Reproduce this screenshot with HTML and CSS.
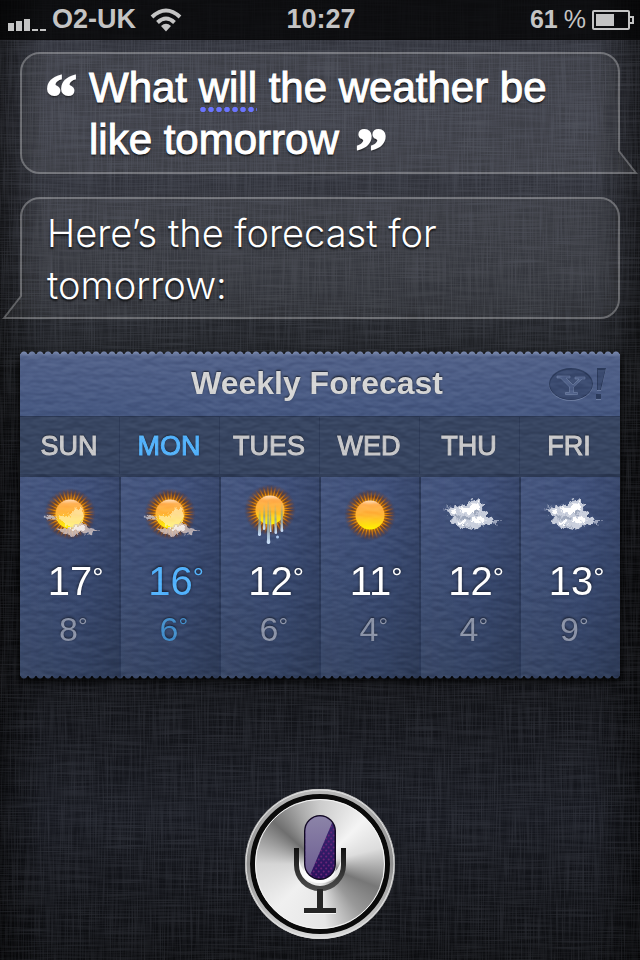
FILE: index.html
```html
<!DOCTYPE html>
<html lang="en">
<head>
    <meta charset="UTF-8">
    <meta name="viewport" content="width=device-width, initial-scale=1.0">
    <title>Weekly Forecast</title>
    <link rel="stylesheet" href="styles.css">
</head>
<body>
    <!-- Linen texture -->
    <svg class="linen" aria-hidden="true">
        <filter id="weaveX" x="0" y="0" width="100%" height="100%">
            <feTurbulence type="fractalNoise" baseFrequency="0.02 0.7" numOctaves="2" seed="4"/>
            <feColorMatrix values="0 0 0 0 0.6  0 0 0 0 0.65  0 0 0 0 0.8  1.6 0 0 0 -0.6"/>
        </filter>
        <filter id="weaveY" x="0" y="0" width="100%" height="100%">
            <feTurbulence type="fractalNoise" baseFrequency="0.7 0.02" numOctaves="2" seed="9"/>
            <feColorMatrix values="0 0 0 0 0.6  0 0 0 0 0.65  0 0 0 0 0.8  1.6 0 0 0 -0.6"/>
        </filter>
        <rect width="100%" height="100%" filter="url(#weaveX)"/>
        <rect width="100%" height="100%" filter="url(#weaveY)"/>
    </svg>

    <!-- Shared drawings -->
    <svg class="defs" aria-hidden="true">
        <defs>
            <linearGradient id="sunFill" x1="0" y1="0" x2="0" y2="1">
                <stop offset="0" stop-color="#ffe0c0"/>
                <stop offset="0.15" stop-color="#ffb050"/>
                <stop offset="0.5" stop-color="#ffb535"/>
                <stop offset="1" stop-color="#fff500"/>
            </linearGradient>
            <radialGradient id="glow">
                <stop offset="0.5" stop-color="#d87a00" stop-opacity="0.95"/>
                <stop offset="0.7" stop-color="#7a3d10" stop-opacity="0.65"/>
                <stop offset="1" stop-color="#5a3030" stop-opacity="0"/>
            </radialGradient>
            <radialGradient id="rays" gradientUnits="userSpaceOnUse" cx="30" cy="30" r="25">
                <stop offset="0.55" stop-color="#ffa800"/>
                <stop offset="0.75" stop-color="#e88000" stop-opacity="0.7"/>
                <stop offset="1" stop-color="#a04010" stop-opacity="0"/>
            </radialGradient>
            <linearGradient id="drip" x1="0" y1="0" x2="0" y2="1">
                <stop offset="0" stop-color="#7fb0b0" stop-opacity="0"/>
                <stop offset="0.5" stop-color="#86a0a0" stop-opacity="0.8"/>
                <stop offset="1" stop-color="#cfe4ff"/>
            </linearGradient>
            <filter id="ragged" x="-20%" y="-30%" width="140%" height="160%">
                <feTurbulence type="fractalNoise" baseFrequency="0.2" numOctaves="4" seed="7" result="n"/>
                <feDisplacementMap in="SourceGraphic" in2="n" scale="8" xChannelSelector="R" yChannelSelector="G"/>
            </filter>
            <symbol id="sun" viewBox="0 0 60 60">
                <circle cx="30" cy="30" r="26" fill="url(#glow)"/>
                <circle cx="30" cy="30" r="19" fill="none" stroke="url(#rays)" stroke-width="12" stroke-dasharray="1.2 2.12"/>
                <circle cx="30" cy="30" r="14.5" fill="url(#sunFill)"/>
            </symbol>
            <symbol id="cloud" viewBox="0 0 64 40">
                <g filter="url(#ragged)">
                    <path d="M4 12 L16 15 L12 19 Z M52 25 L63 25 L58 31 Z M8 10 L14 11 L12 13 Z" fill="#c5cbdb" opacity="0.7"/>
                    <path d="M9 15 Q15 10 21 13 Q23 8 30 9 Q34 2 41 5 Q47 9 44 15 Q50 15 49 21 Q57 23 56 27 Q51 31 45 30 Q38 36 30 33 Q23 36 17 30 Q10 27 15 22 Q9 20 9 15 Z" fill="#c9cfdd"/>
                    <path d="M22 14 Q27 10 31 13 Q35 5 40 8 Q43 12 39 16 L31 19 Q25 20 22 14 Z M32 25 Q38 20 45 22 Q50 25 45 27 Q38 31 32 25 Z M12 16 Q17 13 20 17 L17 20 Z M20 27 Q24 24 29 28 L26 31 Z" fill="#fff"/>
                    <path d="M20 22 Q26 20 32 23 L27 26 Z M35 17 L43 17 L37 21 Z M24 30 L34 31 L26 33 Z M16 22 L22 19 L19 25 Z" fill="#8a95ac" opacity="0.7"/>
                </g>
            </symbol>
            <symbol id="partly" viewBox="0 0 60 60">
                <use href="#sun" width="60" height="60" y="-1"/>
                <g filter="url(#ragged)">
                    <path d="M18 31 Q23 28 28 32 Q33 22 42 23 L44 33 Q39 42 29 41 Q21 39 18 31 Z" fill="#fff2c0" opacity="0.65"/>
                    <path d="M3 31 L12 30 L17 35 L10 34 Z" fill="#d8d8e0" opacity="0.7"/>
                    <path d="M17 44 Q23 41 29 44 Q34 37 43 38 Q47 39 49 43 L60 46 L54 48 Q47 51 40 48 Q33 53 26 49 Q20 49 17 44 Z" fill="#d8c8c4" opacity="0.8"/>
                    <path d="M30 44 Q36 39 44 41 L46 45 L36 46 Z" fill="#fff" opacity="0.7"/>
                </g>
            </symbol>
            <symbol id="rain" viewBox="0 0 60 66">
                <use href="#sun" width="60" height="60" y="-2"/>
                <g fill="url(#drip)">
                    <path d="M19 26 L20.5 26 L21 51 Q21.500 54 19.500 54 Q17.500 54 18 51 Z"/>
                    <path d="M23.500 22 L25 22 L25.500 46 Q25.500 48 24 48 Q22.500 48 23 46 Z"/>
                    <path d="M27.500 18 L29 18 L30 58 Q31 62 28.500 62 Q26 62 27 58 Z"/>
                    <path d="M30 24 L31 24 L31.500 50 L30 50 Z"/>
                    <path d="M34.500 22 L36 22 L37 49 Q37.500 52 36 52 Q34 52 34.500 49 Z"/>
                    <path d="M41 20 L42.500 20 L43 47 Q44 50 42 50 Q40 50 40.500 47 Z"/>
                    <circle cx="37.500" cy="55" r="1.500" fill="#a9c4ea"/>
                </g>
            </symbol>
        </defs>
    </svg>

    <header class="status">
        <div class="carrier">
            <svg width="38" height="14" viewBox="0 0 38 14" fill="#c4c4c4" role="img" aria-label="Signal">
                <path d="M0 6h6v8H0zM8 4h6v10H8zM16 2h6v12h-6zM24 12h6v2h-6zM32 12h6v2h-6z"/>
            </svg>
            <span>O2-UK</span>
            <svg class="wifi" width="32" height="24" viewBox="0 0 32 24" role="img" aria-label="Wi-Fi">
                <g fill="none" stroke="#c4c4c4" stroke-width="4">
                    <path d="M2 9 Q16 -4 30 9"/>
                    <path d="M7.500 14.500 Q16 6.500 24.500 14.500"/>
                </g>
                <path d="M11 18 Q16 13.500 21 18 L16 23.500 Z" fill="#c4c4c4"/>
            </svg>
        </div>
        <time>10:27</time>
        <div class="power">
            <span>61</span>
            <span class="percent">%</span>
            <svg width="42" height="20" viewBox="0 0 42 20" role="img" aria-label="Battery">
                <rect x="1" y="1" width="36" height="18" rx="1" fill="none" stroke="#c4c4c4" stroke-width="2"/>
                <rect x="4" y="4" width="18" height="12" fill="#c4c4c4"/>
                <path d="M38 7h3v6h-3" fill="none" stroke="#c4c4c4" stroke-width="2"/>
            </svg>
        </div>
    </header>

    <main class="siri">
        <div class="bubble question">
            <p><span class="quote open">“</span>What <span class="unsure">will</span> the weather be<br>like tomorrow <span class="quote close">”</span></p>
            <svg class="tail" width="20" height="24" viewBox="0 0 20 24" aria-hidden="true">
                <path d="M1 0 V1 L18 23 H0"/>
            </svg>
        </div>

        <div class="bubble answer">
            <p>Here’s the forecast for tomorrow:</p>
            <svg class="tail" width="20" height="24" viewBox="0 0 20 24" aria-hidden="true">
                <path d="M19 0 V1 L2 23 H20"/>
            </svg>
        </div>

        <div class="shadow">
        <section class="forecast">
            <div class="title">
                <h1>Weekly Forecast</h1>
                <svg class="yahoo" width="60" height="36" viewBox="0 0 60 36" role="img" aria-label="Yahoo!">
                    <ellipse cx="23" cy="19" rx="22" ry="16" fill="#6b7ba0"/>
                    <ellipse cx="23" cy="18" rx="22" ry="16" fill="#2c3b5c"/>
                    <ellipse cx="23" cy="18.500" rx="21" ry="15" fill="#3b4b70"/>
                    <path d="M9 10h13v2h-4l7 7 6-6h-4v-2h10v2h-3L25.500 21v5.500h4v2H17.500v-2h4V21L12.500 12H9z" fill="#4f6088" stroke="#7384a8" stroke-width="0.600"/>
                    <path d="M49 3h9l-5 22h-4zM48 29h5v5h-5z" fill="#6b7ba0"/>
                    <path d="M49 2h9l-5 22h-4zM48 28h5v5h-5z" fill="#2c3b5c"/>
                    <path d="M50 4h7l-5 20h-2z" fill="#3b4b70"/>
                </svg>
            </div>
            <table>
                <thead>
                    <tr>
                        <th>SUN</th>
                        <th class="today">MON</th>
                        <th>TUES</th>
                        <th>WED</th>
                        <th>THU</th>
                        <th>FRI</th>
                    </tr>
                </thead>
                <tbody>
                    <tr class="icons">
                        <td><svg width="60" height="60" role="img" aria-label="Partly cloudy"><use href="#partly"/></svg></td>
                        <td><svg width="60" height="60" role="img" aria-label="Partly cloudy"><use href="#partly"/></svg></td>
                        <td><svg width="60" height="66" role="img" aria-label="Showers"><use href="#rain"/></svg></td>
                        <td><svg width="60" height="60" role="img" aria-label="Sunny"><use href="#sun"/></svg></td>
                        <td><svg width="64" height="40" role="img" aria-label="Cloudy"><use href="#cloud"/></svg></td>
                        <td><svg width="64" height="40" role="img" aria-label="Cloudy"><use href="#cloud"/></svg></td>
                    </tr>
                    <tr class="high">
                        <td>17<span class="deg">°</span></td>
                        <td class="today">16<span class="deg">°</span></td>
                        <td>12<span class="deg">°</span></td>
                        <td>11<span class="deg">°</span></td>
                        <td>12<span class="deg">°</span></td>
                        <td>13<span class="deg">°</span></td>
                    </tr>
                    <tr class="low">
                        <td>8<span class="deg">°</span></td>
                        <td class="today">6<span class="deg">°</span></td>
                        <td>6<span class="deg">°</span></td>
                        <td>4<span class="deg">°</span></td>
                        <td>4<span class="deg">°</span></td>
                        <td>9<span class="deg">°</span></td>
                    </tr>
                </tbody>
            </table>
            <svg class="leather" aria-hidden="true">
                <filter id="grain" x="0" y="0" width="100%" height="100%" color-interpolation-filters="sRGB">
                    <feTurbulence type="fractalNoise" baseFrequency="0.08 0.16" numOctaves="2" seed="3"/>
                    <feColorMatrix values="0 0 0 0 0  0 0 0 0 0  0 0 0 0 0  1 0 0 0 0" result="h"/>
                    <feDiffuseLighting in="h" surfaceScale="2" lighting-color="#fff">
                        <feDistantLight azimuth="270" elevation="28"/>
                    </feDiffuseLighting>
                </filter>
                <rect width="100%" height="100%" filter="url(#grain)"/>
            </svg>
        </section>
        </div>

        <button class="mic" type="button" aria-label="Speak">
            <svg width="150" height="150" viewBox="0 0 150 150" aria-hidden="true">
                <defs>
                    <linearGradient id="rim" x1="0" y1="0" x2="0" y2="1">
                        <stop offset="0" stop-color="#b8b8b8"/>
                        <stop offset="0.5" stop-color="#8e8e8e"/>
                        <stop offset="1" stop-color="#d8d8d8"/>
                    </linearGradient>
                    <linearGradient id="capsule" x1="0" y1="0" x2="0" y2="1">
                        <stop offset="0" stop-color="#3a2a72"/>
                        <stop offset="1" stop-color="#2a0f5c"/>
                    </linearGradient>
                    <linearGradient id="shine" x1="0" y1="0" x2="0" y2="1">
                        <stop offset="0" stop-color="#8c84a8"/>
                        <stop offset="1" stop-color="#6a5a90"/>
                    </linearGradient>
                    <linearGradient id="stand" x1="0" y1="0" x2="0" y2="1">
                        <stop offset="0" stop-color="#111"/>
                        <stop offset="1" stop-color="#4a4a4a"/>
                    </linearGradient>
                    <pattern id="mesh" width="5" height="6" patternUnits="userSpaceOnUse">
                        <circle cx="1.200" cy="1.500" r="1" fill="#6a2478"/>
                        <circle cx="3.700" cy="4.500" r="1" fill="#6a2478"/>
                    </pattern>
                    <clipPath id="capsuleClip"><rect x="60.500" y="27.500" width="29" height="62" rx="14.500"/></clipPath>
                </defs>
                <g fill="none">
                    <circle cx="75" cy="75" r="72.500" stroke="url(#rim)" stroke-width="5"/>
                    <circle cx="75" cy="75" r="74" stroke="#e4e4e4" stroke-width="1"/>
                    <circle cx="75" cy="75" r="67.500" stroke="#0a0a0a" stroke-width="5"/>
                    <circle cx="75" cy="75" r="64.500" stroke="#f4f4f4" stroke-width="1"/>
                </g>
                <g fill="none" stroke="#fff" stroke-opacity="0.8" stroke-width="5">
                    <path d="M51.500 60 V68 A23.500 23.500 0 0 0 98.500 68 V60"/>
                    <path d="M59 122.500 H91"/>
                </g>
                <rect x="59" y="27" width="32" height="67" rx="16" fill="#fff" opacity="0.8"/>
                <g fill="none" stroke="#262626" stroke-width="5">
                    <path d="M51.500 59 V76 A23.500 23.500 0 0 0 98.500 76 V59" stroke="url(#stand)"/>
                    <path d="M75 100 V120" stroke-width="6"/>
                    <path d="M59 121.500 H91"/>
                </g>
                <rect x="59" y="26" width="32" height="65" rx="16" fill="#120a24"/>
                <g clip-path="url(#capsuleClip)">
                    <rect x="60" y="27" width="30" height="64" fill="url(#capsule)"/>
                    <rect x="60" y="27" width="30" height="64" fill="url(#mesh)"/>
                    <path d="M60 27 H90 L87 34 L63 91 H60 Z" fill="url(#shine)"/>
                </g>
            </svg>
        </button>
    </main>
</body>
</html>
```

FILE: styles.css
```css
* {
    box-sizing: border-box;
}

body {
    position: relative;
    display: flex;
    flex-direction: column;
    min-height: 100vh;
    margin: 0;
    color: white;
    font-family: "Liberation Sans", Arial, sans-serif;
    background:
        linear-gradient(to right, rgba(0, 0, 0, 0.6), transparent 7%, transparent 93%, rgba(0, 0, 0, 0.6)),
        linear-gradient(#30323a, #353740 12%, #2c2e35 28%, #1c1e22 38%, #101115 50%, #101115 70%, #171920 85%, #0c0d10);
}

.linen {
    position: absolute;
    inset: 0;
    z-index: -1;
    width: 100%;
    height: 100%;
    opacity: 0.14;
}

.defs {
    position: absolute;
    width: 0;
    height: 0;
}

.status {
    display: grid;
    grid-template-columns: 1fr auto 1fr;
    align-items: center;
    height: 40px;
    padding: 0 6px 0 8px;
    color: #c4c4c4;
    font-size: 27px;
    font-weight: bold;
    background: rgba(0, 0, 0, 0.75);
    border-bottom: 1px solid #0a0a0c;
}

.carrier, .power {
    display: flex;
    align-items: center;
    gap: 6px;
}

.carrier svg:first-child {
    margin-top: 8px;
}

.wifi {
    margin-left: 8px;
}

.power {
    justify-content: flex-end;
    font-size: 25px;
}

.percent {
    font-weight: normal;
}

.siri {
    flex: 1;
    display: flex;
    flex-direction: column;
    padding: 12px 20px 21px;
}

.bubble {
    position: relative;
    padding: 10px 25px 8px 27px;
    margin-bottom: 23px;
    font-size: 40px;
    line-height: 52px;
    text-shadow: 0 2px 2px rgba(0, 0, 0, 0.7);
    background: rgba(255, 255, 255, 0.05);
    border-radius: 20px;
}

.bubble::before {
    content: "";
    position: absolute;
    inset: 0;
    border: 2px solid rgba(255, 255, 255, 0.27);
    border-radius: inherit;
}

.bubble p {
    margin: 0;
}

.tail {
    position: absolute;
    bottom: 0;
    fill: rgba(255, 255, 255, 0.05);
    stroke: rgba(255, 255, 255, 0.27);
    stroke-width: 2px;
}

.question {
    padding-left: 69px;
    font-size: 42px;
    -webkit-text-stroke: 1px white;
    border-bottom-right-radius: 0;
}

.question::before {
    clip-path: polygon(0 0, 100% 0, 100% calc(100% - 24px), calc(100% - 2px) calc(100% - 24px), calc(100% - 2px) 100%, 0 100%);
}

.question .tail {
    left: calc(100% - 2px);
}

.answer {
    margin-bottom: 32px;
    font-family: Inter, "Liberation Sans", sans-serif;
    font-size: 38px;
    font-weight: 300;
    border-bottom-left-radius: 0;
}

.answer::before {
    clip-path: polygon(0 0, 100% 0, 100% 100%, 2px 100%, 2px calc(100% - 24px), 0 calc(100% - 24px));
}

.answer .tail {
    right: calc(100% - 2px);
}

.quote {
    font-family: "Liberation Serif", serif;
    font-size: 64px;
    font-weight: bold;
    line-height: 0;
    vertical-align: -16px;
    -webkit-text-stroke: 2px white;
}

.open {
    display: inline-block;
    width: 44px;
    margin-left: -44px;
}

.close {
    margin-left: 5px;
    vertical-align: -18px;
}

.unsure {
    padding-bottom: 2px;
    background: radial-gradient(circle, #6a74ff 0 2px, rgba(106, 116, 255, 0.5) 3px, transparent 3px) left bottom / 8px 7px repeat-x;
}

.shadow {
    filter: drop-shadow(0 3px 4px black);
}

.forecast {
    position: relative;
    background: #3a4c74;
    mask:
        linear-gradient(black 0 0) center / 100% calc(100% - 6px) no-repeat,
        radial-gradient(circle at 4px 4px, black 3px, transparent 4px) left top / 8px 4px repeat-x,
        radial-gradient(circle at 4px 0, black 3px, transparent 4px) left bottom / 8px 4px repeat-x;
}

.leather {
    position: absolute;
    inset: 0;
    width: 100%;
    height: 100%;
    opacity: 0.16;
    mix-blend-mode: soft-light;
    pointer-events: none;
}

.title {
    display: flex;
    align-items: center;
    justify-content: center;
    position: relative;
    height: 66px;
    background: linear-gradient(#8291b5, #52628a 6px, #465881);
    border-bottom: 1px solid #2b3854;
}

.title h1 {
    margin: 0;
    padding-right: 6px;
    color: #d6d6d6;
    font-size: 32px;
    text-shadow: 0 -1px 2px rgba(0, 0, 0, 0.7);
}

.yahoo {
    position: absolute;
    right: 12px;
}

table {
    width: 100%;
    table-layout: fixed;
    border-collapse: collapse;
}

th, td {
    padding: 0 2px 0 0;
    text-align: center;
}

th {
    height: 58px;
    padding-top: 3px;
    color: #c9c9cb;
    font-size: 27px;
    font-weight: normal;
    -webkit-text-stroke: 1px;
    text-shadow: 0 -1px 2px rgba(0, 0, 0, 0.7);
    background: #384662;
    border-bottom: 3px solid #2d3a55;
    box-shadow: inset -1px 0 #2f3c58;
}

tbody {
    background: linear-gradient(#42537d, #3a4b72 50%, #334262);
}

td {
    background: linear-gradient(to right, rgba(255, 255, 255, 0.03), transparent 60%, rgba(0, 0, 0, 0.12));
    border-right: 2px solid #2b3958;
}

th:last-child, td:last-child {
    border-right: none;
    box-shadow: none;
}

.icons td {
    height: 79px;
    padding-right: 0;
    line-height: 0;
}

.icons svg {
    vertical-align: middle;
}

.high td {
    height: 53px;
    padding: 2px 0 0 1px;
    font-size: 40px;
    text-shadow: 0 -1px 3px rgba(0, 0, 0, 0.7);
}

.low td {
    height: 72px;
    padding-bottom: 28px;
    color: #8d95a9;
    font-size: 34px;
    text-shadow: 0 -1px 2px rgba(0, 0, 0, 0.5);
}

.deg {
    display: inline-block;
    width: 0;
    font-size: 28px;
    line-height: 1;
    vertical-align: 8px;
}

.low .deg {
    font-size: 24px;
    vertical-align: 7px;
}

th.today, .high .today {
    color: #55b4fc;
}

.low .today {
    color: #4590cc;
}

.mic {
    width: 150px;
    height: 150px;
    margin: auto auto 0;
    padding: 0;
    border: none;
    border-radius: 50%;
    background: conic-gradient(#ccc, #f4f4f4 45deg, #ddd 75deg, #777 112deg, #999 140deg, #e6e6e6 175deg, #f0f0f0 225deg, #d5d5d5 270deg, #6f6f6f 312deg, #aaa 340deg, #ccc);
    cursor: pointer;
}
```
